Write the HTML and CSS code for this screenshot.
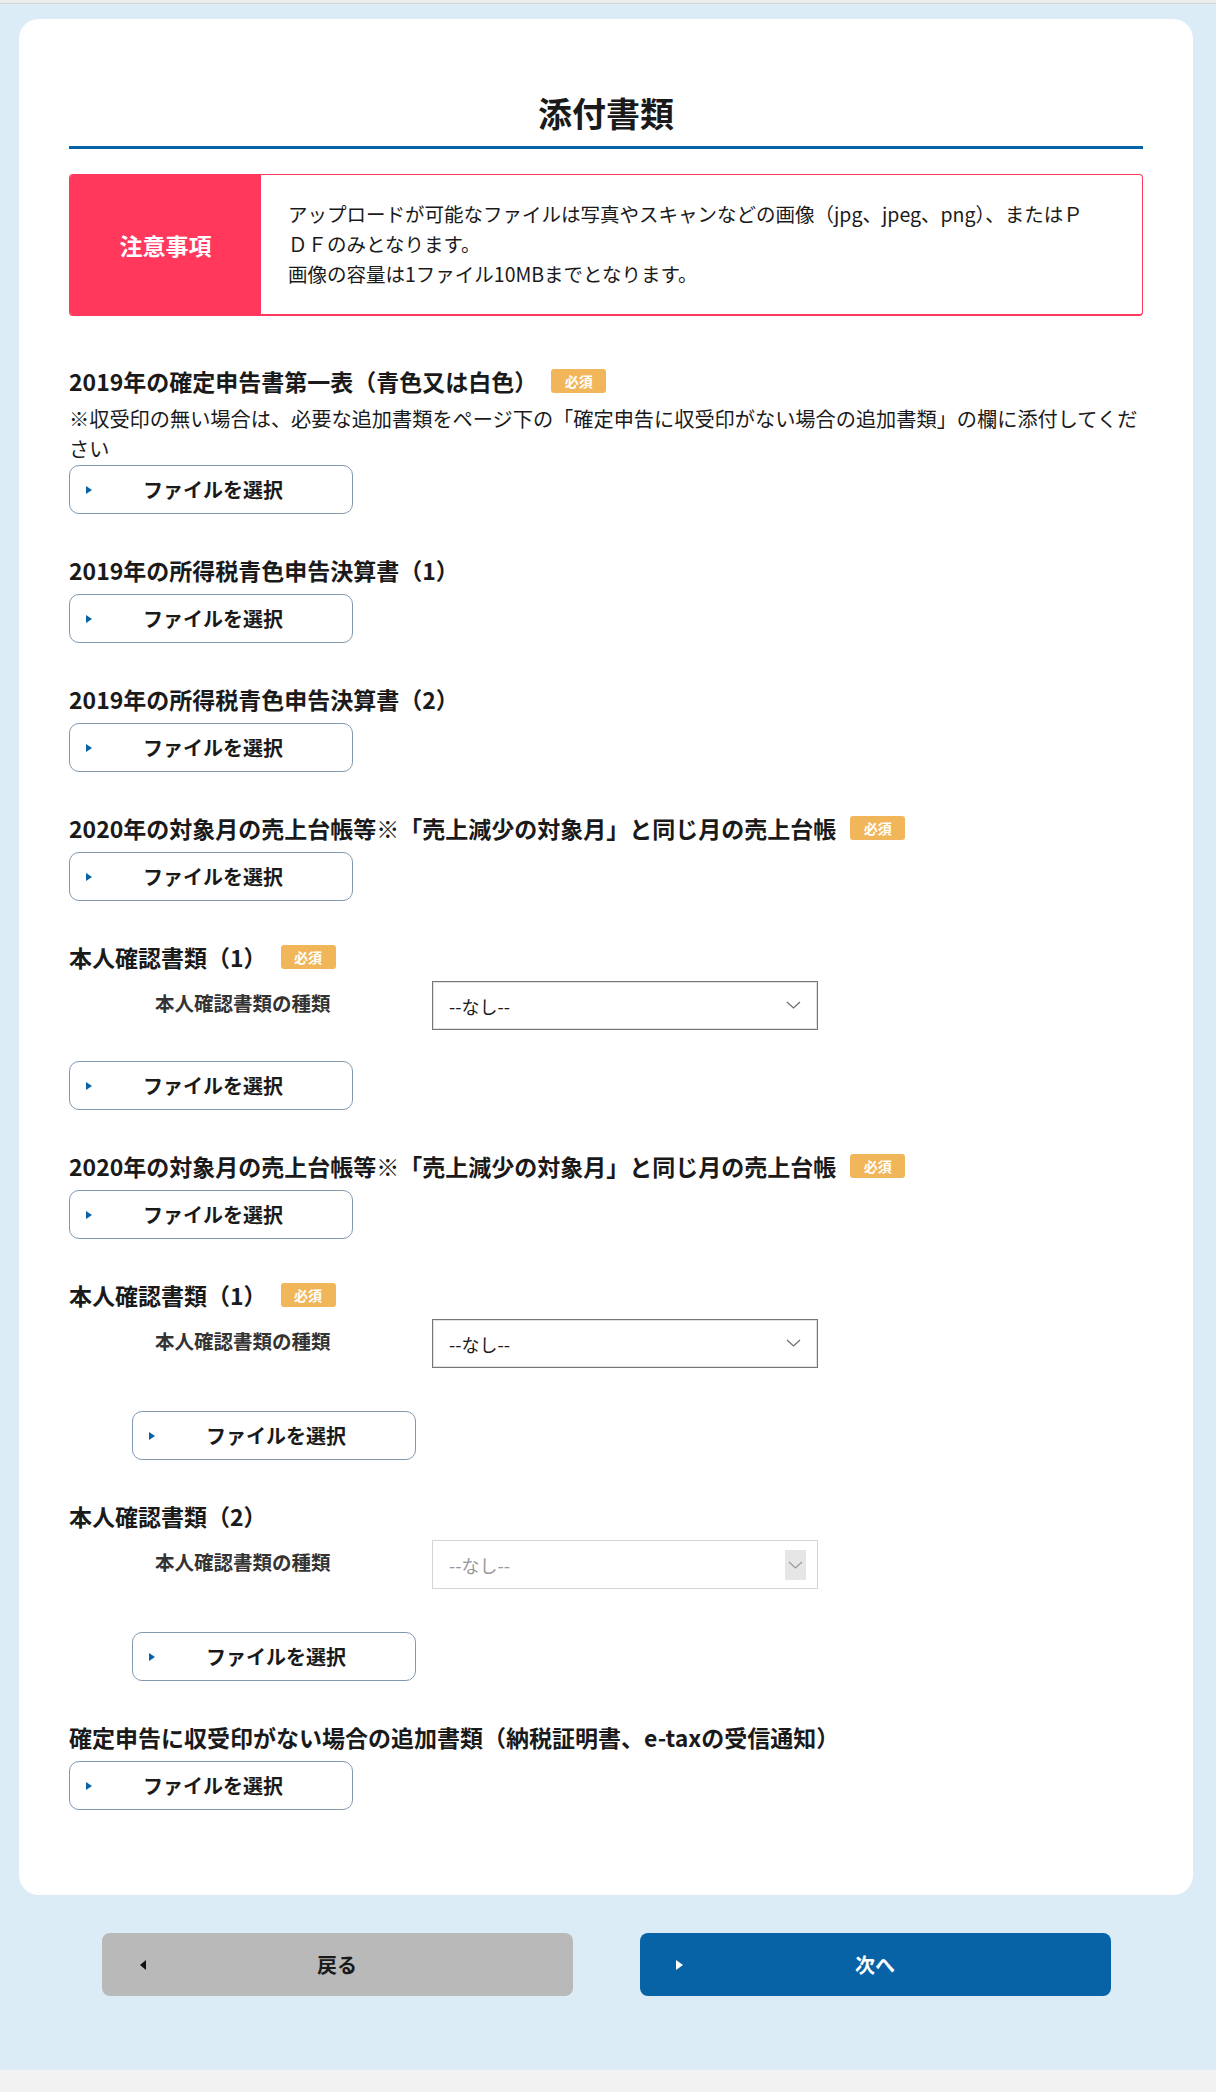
FILE: index.html
```html
<!DOCTYPE html>
<html lang="ja">
<head>
    <meta charset="UTF-8">
    <meta name="viewport" content="width=device-width, initial-scale=1.0">
    <title>添付書類</title>
    <link rel="stylesheet" href="styles.css">
</head>
<body>
    <div class="topbar"></div>

    <main class="page">
        <section class="card">
            <h1 class="title">添付書類</h1>

            <div class="notice">
                <div class="notice-label">注意事項</div>
                <div class="notice-body">
                    <p>アップロードが可能なファイルは写真やスキャンなどの画像（jpg、jpeg、png）、またはＰＤＦのみとなります。</p>
                    <p>画像の容量は1ファイル10MBまでとなります。</p>
                </div>
            </div>

            <div class="field">
                <h2 class="field-title">2019年の確定申告書第一表（青色又は白色）<span class="badge">必須</span></h2>
                <p class="field-note">※収受印の無い場合は、必要な追加書類をページ下の「確定申告に収受印がない場合の追加書類」の欄に添付してください</p>
                <button class="file-btn"><span class="arrow"></span>ファイルを選択</button>
            </div>

            <div class="field">
                <h2 class="field-title">2019年の所得税青色申告決算書（1）</h2>
                <button class="file-btn"><span class="arrow"></span>ファイルを選択</button>
            </div>

            <div class="field">
                <h2 class="field-title">2019年の所得税青色申告決算書（2）</h2>
                <button class="file-btn"><span class="arrow"></span>ファイルを選択</button>
            </div>

            <div class="field">
                <h2 class="field-title">2020年の対象月の売上台帳等※「売上減少の対象月」と同じ月の売上台帳<span class="badge">必須</span></h2>
                <button class="file-btn"><span class="arrow"></span>ファイルを選択</button>
            </div>

            <div class="field">
                <h2 class="field-title">本人確認書類（1）<span class="badge">必須</span></h2>
                <div class="select-row">
                    <label class="select-label">本人確認書類の種類</label>
                    <div class="select">
                        <select><option>--なし--</option></select>
                        <svg class="chevron" width="15" height="8" viewBox="0 0 15 8"><path d="M1 1 L7.5 7 L14 1" fill="none" stroke="#6d6d6d" stroke-width="1.2"/></svg>
                    </div>
                </div>
                <button class="file-btn after-select"><span class="arrow"></span>ファイルを選択</button>
            </div>

            <div class="field">
                <h2 class="field-title">2020年の対象月の売上台帳等※「売上減少の対象月」と同じ月の売上台帳<span class="badge">必須</span></h2>
                <button class="file-btn"><span class="arrow"></span>ファイルを選択</button>
            </div>

            <div class="field">
                <h2 class="field-title">本人確認書類（1）<span class="badge">必須</span></h2>
                <div class="select-row">
                    <label class="select-label">本人確認書類の種類</label>
                    <div class="select">
                        <select><option>--なし--</option></select>
                        <svg class="chevron" width="15" height="8" viewBox="0 0 15 8"><path d="M1 1 L7.5 7 L14 1" fill="none" stroke="#6d6d6d" stroke-width="1.2"/></svg>
                    </div>
                </div>
                <button class="file-btn after-select indent"><span class="arrow"></span>ファイルを選択</button>
            </div>

            <div class="field">
                <h2 class="field-title">本人確認書類（2）</h2>
                <div class="select-row">
                    <label class="select-label">本人確認書類の種類</label>
                    <div class="select disabled">
                        <select disabled><option>--なし--</option></select>
                        <span class="chevron-box">
                            <svg width="15" height="8" viewBox="0 0 15 8"><path d="M1 1 L7.5 7 L14 1" fill="none" stroke="#9a9a9a" stroke-width="1.2"/></svg>
                        </span>
                    </div>
                </div>
                <button class="file-btn after-select indent"><span class="arrow"></span>ファイルを選択</button>
            </div>

            <div class="field">
                <h2 class="field-title">確定申告に収受印がない場合の追加書類（納税証明書、e-taxの受信通知）</h2>
                <button class="file-btn"><span class="arrow"></span>ファイルを選択</button>
            </div>
        </section>

        <nav class="pager">
            <button class="pager-btn back">戻る</button>
            <button class="pager-btn next">次へ</button>
        </nav>
    </main>

    <footer class="bottombar"></footer>
</body>
</html>
```

FILE: styles.css
```css
:root {
    --blue: #0762a6;
    --pink: #ff385c;
    --sky: #dcecf6;
    --badge: #f2b65a;
}

* {
    box-sizing: border-box;
    margin: 0;
    padding: 0;
}

body {
    font-family: "Noto Sans CJK JP", "Noto Sans", sans-serif;
    color: #1a1a1a;
    background: var(--sky);
}

.topbar {
    height: 4px;
    background: #ececec;
    border-bottom: 1px solid #d6d6d6;
}

.page {
    padding: 15px 23px 0 19px;
}

.card {
    background: white;
    border-radius: 20px;
    padding: 72px 50px 85px;
}

.title {
    font-size: 34px;
    line-height: 44px;
    font-weight: 700;
    text-align: center;
    padding-bottom: 11px;
    border-bottom: 3px solid var(--blue);
}

/* notice box */
.notice {
    display: flex;
    margin-top: 25px;
    border: 1px solid var(--pink);
    border-bottom-width: 2px;
    border-radius: 4px;
    overflow: hidden;
    height: 142px;
}

.notice-label {
    width: 191px;
    flex-shrink: 0;
    background: var(--pink);
    color: white;
    font-size: 23px;
    font-weight: 700;
    display: flex;
    align-items: center;
    justify-content: center;
}

.notice-body {
    padding: 24px 50px 0 27px;
    font-size: 19.5px;
    line-height: 30px;
}

/* fields */
.field {
    margin-top: 40px;
}

.notice + .field {
    margin-top: 49px;
}

.field-title {
    font-size: 23px;
    line-height: 32px;
    font-weight: 700;
    margin-bottom: 8px;
    display: flex;
    align-items: center;
}

.badge {
    display: inline-flex;
    align-items: center;
    justify-content: center;
    width: 55px;
    height: 24px;
    margin-left: 14px;
    background: var(--badge);
    border-radius: 3px;
    color: white;
    font-size: 14px;
    font-weight: 700;
}

.field-note {
    font-size: 20.2px;
    line-height: 30px;
    margin-top: -1px;
    margin-bottom: 1px;
}

.file-btn {
    display: flex;
    align-items: center;
    width: 284px;
    height: 49px;
    padding-left: 16px;
    background: white;
    border: 1px solid #8299b0;
    border-radius: 10px;
    font-family: inherit;
    font-size: 20px;
    font-weight: 700;
    color: #1a1a1a;
}

.file-btn .arrow {
    width: 0;
    height: 0;
    border-top: 4px solid transparent;
    border-bottom: 4px solid transparent;
    border-left: 6px solid var(--blue);
    margin-right: 51px;
}

.file-btn.after-select {
    margin-top: 31px;
}

.file-btn.indent {
    margin-top: 43px;
    margin-left: 63px;
}

/* select rows */
.select-row {
    display: flex;
    align-items: center;
}

.select-label {
    width: 363px;
    padding-left: 86px;
    padding-bottom: 6px;
    font-size: 19.5px;
    font-weight: 700;
    color: #333;
}

.select {
    position: relative;
    width: 386px;
    height: 49px;
}

.select select {
    appearance: none;
    width: 100%;
    height: 100%;
    padding-left: 16px;
    border: 1px solid #767676;
    box-shadow: inset 0 0 0 1px #e2e2e2;
    border-radius: 0;
    background: white;
    font-family: inherit;
    font-size: 18px;
    color: #1a1a1a;
}

.chevron {
    position: absolute;
    right: 17px;
    top: 20px;
}

.select.disabled select {
    border-color: #c4c4c4;
    box-shadow: none;
    color: #6d6d6d;
}

.chevron-box {
    position: absolute;
    right: 12px;
    top: 10px;
    width: 21px;
    height: 30px;
    background: #e6e6e6;
    display: flex;
    align-items: center;
    justify-content: center;
}

/* pager */
.pager {
    display: flex;
    justify-content: center;
    gap: 67px;
    margin: 38px 0 74px;
}

.pager-btn {
    position: relative;
    width: 471px;
    height: 63px;
    border: none;
    border-radius: 8px;
    font-family: inherit;
    font-size: 20px;
    font-weight: 700;
}

.pager-btn::before {
    content: "";
    position: absolute;
    top: 27px;
    border-top: 5px solid transparent;
    border-bottom: 5px solid transparent;
}

.back {
    background: #b9b9b9;
    color: #1a1a1a;
}

.back::before {
    left: 38px;
    border-right: 6px solid #111;
}

.next {
    background: var(--blue);
    color: white;
}

.next::before {
    left: 36px;
    border-left: 7px solid white;
}

.bottombar {
    height: 23px;
    background: #f2f2f2;
}
```
